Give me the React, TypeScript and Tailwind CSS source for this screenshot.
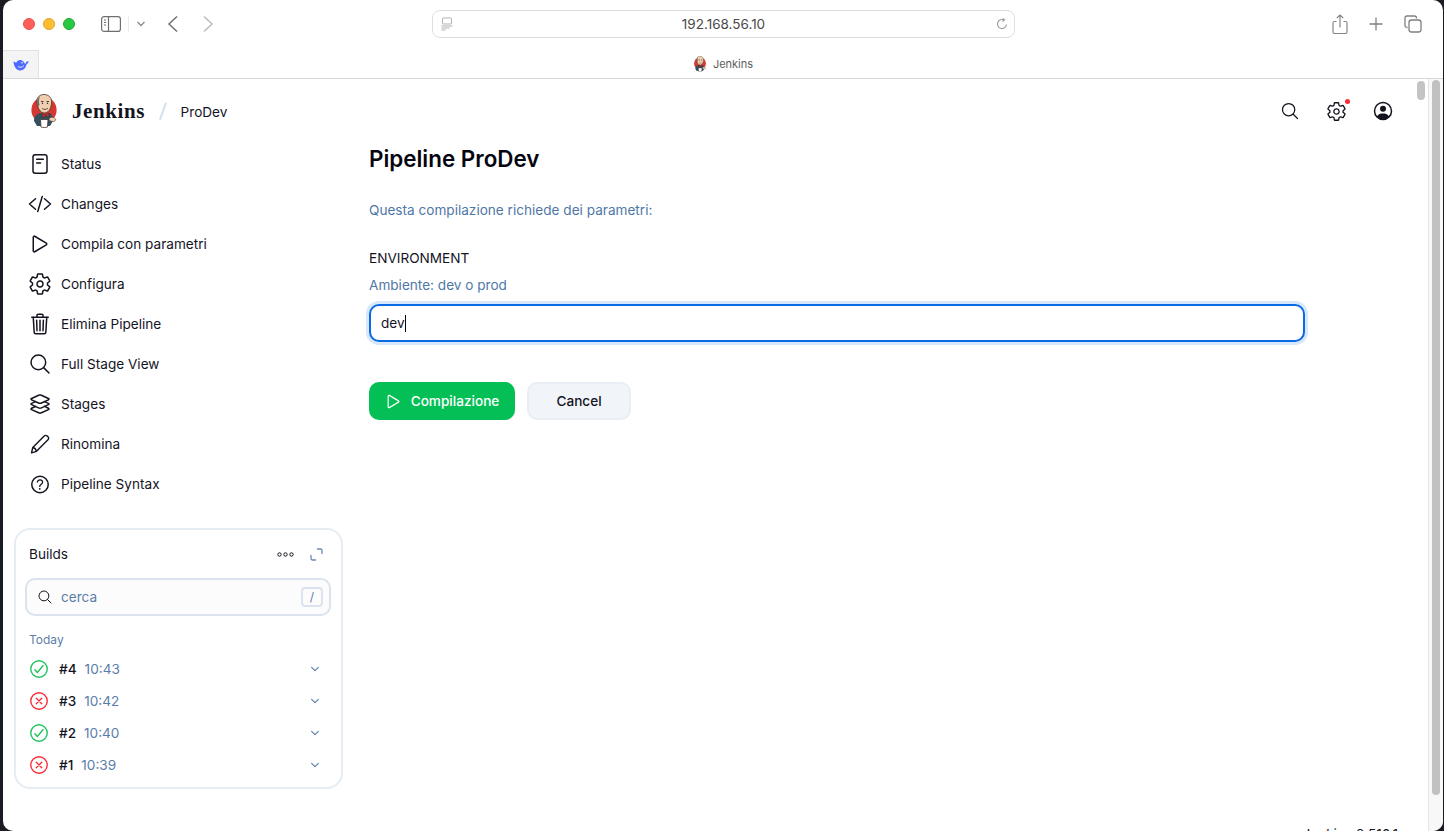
import React from 'react';
import {
  IoCheckmarkCircleOutline,
  IoChevronDown,
  IoCloseCircleOutline,
  IoCodeSlashOutline,
  IoHelpCircleOutline,
  IoLayersOutline,
  IoPlayOutline,
  IoSearchOutline,
  IoSettingsOutline,
  IoTrashOutline,
} from 'react-icons/io5';

const StatusIcon = () => (
  <svg width="24" height="24" viewBox="0 0 24 24" fill="none" stroke="currentColor" strokeWidth="1.5" strokeLinecap="round">
    <rect x="5" y="2.800" width="14" height="18.400" rx="2.200" />
    <path d="M8.700 7.200h6.600M8.700 11h3.800" />
  </svg>
);

const PencilIcon = () => (
  <svg width="24" height="24" viewBox="0 0 24 24" fill="none" stroke="currentColor" strokeWidth="1.400" strokeLinejoin="round">
    <path d="M3.500 20.800 4.800 15.500 16.200 4a2.100 2.100 0 0 1 3 0l.8.800a2.100 2.100 0 0 1 0 3L8.500 19.300z" />
    <path d="M4.800 15.500c1.800.3 3.200 1.800 3.700 3.800" />
  </svg>
);

const JenkinsLogo = ({ className }: { className: string }) => (
  <svg className={className} viewBox="0 0 26 34">
    <ellipse cx="13" cy="16" rx="12.600" ry="13" fill="#d33833" />
    <path d="M3 27c0-5 3-7 6-8l5 2 5-2c2 2 3 4 3 8l-3 5H6z" fill="#335061" />
    <path d="M6 8C5.500 3 9 .500 13 .500s7.500 2.500 7.500 7c0 5-1.500 11-7 11.500C9 19 6.500 14 6 8z" fill="#efcfae" stroke="#49322b" strokeWidth=".8" />
    <path d="M6 8c.500-3 1.500-4.500 3-5.500-1 2-1.500 5-.500 8.500L7 12.500z" fill="#6d6b6d" />
    <path d="M10 7.500h2.500M15.500 7.500H18" stroke="#231f20" strokeWidth=".8" />
    <circle cx="11.500" cy="9.300" r=".7" fill="#231f20" />
    <circle cx="16.500" cy="9.300" r=".7" fill="#231f20" />
    <path d="M11 14.500c2 1.200 4 1.200 6-.3" stroke="#49322b" strokeWidth=".8" fill="none" />
    <path d="M11 19.500l3.500 1.800 3.500-2.300v4l-3.500-1-3.500 1.500z" fill="#d33833" stroke="#231f20" strokeWidth=".5" />
    <path d="M9.500 25.500h7.500l-.5 7.500c-2 .8-4.500.8-6.500 0z" fill="#fff" stroke="#49322b" strokeWidth=".8" />
    <path d="M19 23.500c2-.8 4.500 0 5.500 1.500.500 1-.5 2.500-2 2.500-2 0-4-.5-4.500-2z" fill="#efcfae" stroke="#49322b" strokeWidth=".6" />
  </svg>
);

const navItems = [
  { label: 'Status', icon: <StatusIcon /> },
  { label: 'Changes', icon: <IoCodeSlashOutline size={24} /> },
  { label: 'Compila con parametri', icon: <IoPlayOutline size={24} /> },
  { label: 'Configura', icon: <IoSettingsOutline size={24} /> },
  { label: 'Elimina Pipeline', icon: <IoTrashOutline size={24} /> },
  { label: 'Full Stage View', icon: <IoSearchOutline size={24} /> },
  { label: 'Stages', icon: <IoLayersOutline size={24} /> },
  { label: 'Rinomina', icon: <PencilIcon /> },
  { label: 'Pipeline Syntax', icon: <IoHelpCircleOutline size={25} /> },
];

const builds = [
  { id: '#4', time: '10:43', ok: true },
  { id: '#3', time: '10:42', ok: false },
  { id: '#2', time: '10:40', ok: true },
  { id: '#1', time: '10:39', ok: false },
];

const Toolbar = () => (
  <div className="flex h-[50px] items-center pb-[2px] text-[#6f6f6f]">
    <div className="flex w-[98px] items-center gap-[8px] pl-[20px]">
      <span className="h-3 w-3 rounded-full border border-[#e5534b] bg-[#ff5f57]" />
      <span className="h-3 w-3 rounded-full border border-[#e0a030] bg-[#febc2e]" />
      <span className="h-3 w-3 rounded-full border border-[#1ea83a] bg-[#28c840]" />
    </div>
    <svg width="20" height="16" viewBox="0 0 20 16" fill="none" stroke="currentColor" strokeWidth="1.200">
      <rect x=".6" y=".6" width="18.800" height="14.800" rx="2.500" />
      <path d="M7.500 .6v14.800" />
      <path d="M3 4h2M3 6.500h2M3 9h2" strokeWidth="1" />
    </svg>
    <span className="ml-[7px] h-[16px] w-px bg-[#ececec]" />
    <svg className="ml-[7px]" width="10" height="6" viewBox="0 0 10 6" fill="none" stroke="#8a8a8a" strokeWidth="1.300">
      <path d="M1.500 1 5 4.500 8.500 1" />
    </svg>
    <svg className="ml-[21px]" width="12" height="18" viewBox="0 0 12 18" fill="none" stroke="#6f6f6f" strokeWidth="1.500">
      <path d="M10 1.500 2 9l8 7.500" />
    </svg>
    <svg className="ml-[23px]" width="12" height="18" viewBox="0 0 12 18" fill="none" stroke="#bcbcbc" strokeWidth="1.500">
      <path d="M2 1.500 10 9l-8 7.500" />
    </svg>
    <div className="ml-[218px] flex h-[28px] w-[583px] items-center rounded-[8px] border border-[#dedede] bg-white pl-[8px] pr-[6px]">
      <svg width="12" height="14" viewBox="0 0 12 14" fill="none" stroke="#a8a8a8" strokeWidth=".9">
        <rect x="1.500" y="1" width="9" height="6" rx="1" />
        <path d="M.5 9h11M.5 11h8M.5 13h4" />
      </svg>
      <span className="flex-1 pr-[2px] text-center text-[13.500px] text-[#4a4a4a]">192.168.56.10</span>
      <svg width="12" height="12" viewBox="0 0 12 12" fill="none" stroke="#9a9a9a" strokeWidth="1.100">
        <path d="M10.500 6.500A4.500 4.500 0 1 1 7.500 1.800M7 .2l1.500 1.800L6.500 3.500" />
      </svg>
    </div>
    <svg className="ml-[317px]" width="16" height="21" viewBox="0 0 16 21" fill="none" stroke="#858585" strokeWidth="1.200">
      <path d="M4.500 7.500H2.500a1.500 1.500 0 0 0-1.500 1.500v9a1.500 1.500 0 0 0 1.500 1.500h11a1.500 1.500 0 0 0 1.500-1.500V9a1.500 1.500 0 0 0-1.500-1.500h-2" />
      <path d="M8 13.500V1M4.800 4 8 1l3.200 3" />
    </svg>
    <svg className="ml-[21px]" width="14" height="14" viewBox="0 0 14 14" fill="none" stroke="#808080" strokeWidth="1.300">
      <path d="M7 .5v13M.5 7h13" />
    </svg>
    <svg className="ml-[21px]" width="18" height="18" viewBox="0 0 18 18" fill="none" stroke="#808080" strokeWidth="1.300">
      <path d="M3.500 12.500H3a2 2 0 0 1-2-2V3a2 2 0 0 1 2-2h7.500a2 2 0 0 1 2 2v.5" />
      <rect x="5" y="5" width="12" height="12" rx="2.500" />
    </svg>
  </div>
);

const TabBar = () => (
  <div className="flex h-[29px] border-b border-[#d8d8d8]">
    <div className="flex w-[36px] items-center justify-center border-r border-t border-[#e2e2e2] bg-[#f4f4f4]">
      <svg width="16" height="12" viewBox="0 0 16 12">
        <path d="M.5 2.500C2 2.500 2.500 3.500 3 4 4 1.500 7 .5 9 1.500c1.500.7 2.500 2 3 3.500.8-.5 1.200-1.500 1-2.500 1 .5 2 .3 2.800-.7-.3 1.700-1 3-2.300 3.700C13 8.500 10.500 11.500 7 11.500 3.500 11.500 1 8 .5 2.500z" fill="#4d6bfe" />
        <path d="M5 7.500c2 1.300 4 1 6-1" stroke="#f4f4f4" strokeWidth=".9" fill="none" />
        <circle cx="9" cy="3.800" r=".8" fill="#f4f4f4" />
      </svg>
    </div>
    <div className="flex flex-1 items-center justify-center gap-[6px] pr-[36px] text-[11px] text-[#5e5e5e]">
      <JenkinsLogo className="h-[16px] w-[14px]" />
      Jenkins
    </div>
  </div>
);

const Header = () => (
  <header className="flex h-[64px] items-center pl-[28px]">
    <JenkinsLogo className="h-[34px] w-[26px]" />
    <span className="ml-[15px] mt-[2px] font-['Liberation_Serif',serif] text-[21px] font-bold tracking-[0.6px] text-[#14141f]">Jenkins</span>
    <span className="ml-[17px] h-[18px] w-[1.500px] rotate-[20deg] bg-[#d5e0ec]" />
    <span className="ml-[17px] mt-[2px] text-[13.600px]">ProDev</span>
    <div className="ml-auto flex items-center gap-[26px] pr-[23px]">
      <IoSearchOutline size={20} />
      <span className="relative flex">
        <IoSettingsOutline size={21} />
        <span className="absolute right-[-3px] top-[-2px] h-[5px] w-[5px] rounded-full bg-[#fb2c36]" />
      </span>
      <svg width="20" height="20" viewBox="0 0 20 20">
        <circle cx="10" cy="10" r="8.500" fill="none" stroke="currentColor" strokeWidth="1.500" />
        <circle cx="10" cy="7.800" r="3" fill="currentColor" />
        <path d="M3.800 15.500C5.500 13 7.500 12.500 10 12.500s4.500.5 6.200 3C14.500 17.500 12.500 18.500 10 18.500s-4.500-1-6.200-3z" fill="currentColor" />
      </svg>
    </div>
  </header>
);

const Sidebar = () => (
  <aside className="w-[366px] shrink-0 pl-[11px]">
    <nav className="flex flex-col pt-[1px]">
      {navItems.map((item) => (
        <div key={item.label} className="flex h-10 items-center gap-[9px] pl-[14px] text-[13.600px]">
          <span className="flex w-[24px] justify-center">{item.icon}</span>
          {item.label}
        </div>
      ))}
    </nav>
    <section className="mt-[24px] h-[261px] w-[329px] rounded-[16px] border-2 border-[#e6ecf3] px-[9px] pt-[12px]">
      <div className="flex h-[24px] items-center pl-[4px] pr-[9px]">
        <span className="text-[13.600px]">Builds</span>
        <svg className="ml-auto" width="17" height="5" viewBox="0 0 17 5" fill="none" stroke="#14141f" strokeWidth="1">
          <circle cx="2.500" cy="2.500" r="1.700" />
          <circle cx="8.500" cy="2.500" r="1.700" />
          <circle cx="14.500" cy="2.500" r="1.700" />
        </svg>
        <svg className="ml-[16px]" width="13" height="13" viewBox="0 0 13 13" fill="none" stroke="#6a8ab3" strokeWidth="1.300" strokeLinecap="round">
          <path d="M7.500 1H10.500a1.500 1.500 0 0 1 1.500 1.500V5.500M5.500 12H2.500A1.500 1.500 0 0 1 1 10.500V7.500" />
        </svg>
      </div>
      <div className="mt-[12px] flex h-[38px] w-[306px] items-center rounded-[10px] border-2 border-[#dae3ee] bg-[#fcfcfd] pl-[10px] pr-[6px]">
        <IoSearchOutline size={16} />
        <span className="ml-[8px] pt-[1px] text-[13.600px] text-[#5b7ea9]">cerca</span>
        <span className="ml-auto flex h-[20px] w-[22px] items-center justify-center rounded-[4px] border-2 border-[#dae3ee] text-[12px] text-[#5b7ea9]">/</span>
      </div>
      <div className="mt-[15px] pl-[4px] text-[12px] text-[#5b7ea9]">Today</div>
      <ul className="mt-[4px]">
        {builds.map((build) => (
          <li key={build.id} className="flex h-[32px] items-center pl-[3px] pr-[11px] text-[13.600px]">
            {build.ok ? (
              <IoCheckmarkCircleOutline size={22} className="text-[#1cc45f]" />
            ) : (
              <IoCloseCircleOutline size={22} className="text-[#fb2c36]" />
            )}
            <span className="ml-[9px] font-medium">{build.id}</span>
            <span className="ml-[8px] text-[#5b7ea9]">{build.time}</span>
            <IoChevronDown size={12} className="ml-auto text-[#5b7ea9]" />
          </li>
        ))}
      </ul>
    </section>
  </aside>
);

const BuildForm = () => (
  <main className="w-[936px] shrink-0 pt-[1px]">
    <h1 className="text-[22.400px] font-semibold leading-[30px] text-[#05050f]">Pipeline ProDev</h1>
    <p className="mt-[26px] text-[13.600px] leading-[20px] text-[#4f77a6]">Questa compilazione richiede dei parametri:</p>
    <div className="mt-[28px] text-[13.600px] leading-[20px]">ENVIRONMENT</div>
    <div className="mt-[7px] text-[13.600px] leading-[20px] text-[#4f77a6]">Ambiente: dev o prod</div>
    <div className="mt-[9px] flex h-[38px] items-center rounded-[10px] border-2 border-[#0a6ae3] bg-white pl-[10px] text-[13.600px] shadow-[0_0_0_3px_#d7e7fc]">
      dev
      <span className="h-[17px] w-px bg-[#05050f]" />
    </div>
    <div className="mt-[40px] flex gap-[12px]">
      <button className="flex h-[38px] w-[146px] items-center justify-center gap-[8px] rounded-[10px] bg-[#03bf55] pr-[1px] text-[13.600px] font-medium text-white">
        <IoPlayOutline size={19} />
        Compilazione
      </button>
      <button className="h-[38px] w-[104px] rounded-[10px] border-2 border-[#e9eef4] bg-[#f1f4f8] text-[13.600px] font-[450]">
        Cancel
      </button>
    </div>
  </main>
);

const Scrollbars = () => (
  <div className="flex w-[27px] shrink-0">
    <div className="w-[12px] pl-[1px] pt-[2px]">
      <div className="h-[19px] w-[8px] rounded-full bg-[#c4c4c4]" />
    </div>
    <div className="flex-1 border-l border-[#e4e4e4] bg-[#f8f8f8] pl-[3px] pt-[1px]">
      <div className="h-[715px] w-[8px] rounded-full bg-[#c1c1c1]" />
    </div>
  </div>
);

const App: React.FC = () => {
  return (
    <div className="h-[831px] w-[1444px] overflow-hidden bg-[#1b1b24] pl-[3px] pr-[1px] font-['Inter',sans-serif] text-[#14141f]">
      <div className="h-full overflow-hidden rounded-[10px] bg-white">
        <Toolbar />
        <TabBar />
        <div className="flex h-[752px]">
          <div className="min-w-0 flex-1">
            <Header />
            <div className="flex">
              <Sidebar />
              <BuildForm />
            </div>
            <footer className="mt-[37px] pr-[18px] text-right text-[13.600px] leading-[16px]">Jenkins 2.516.1</footer>
          </div>
          <Scrollbars />
        </div>
      </div>
    </div>
  );
};

export default App;
